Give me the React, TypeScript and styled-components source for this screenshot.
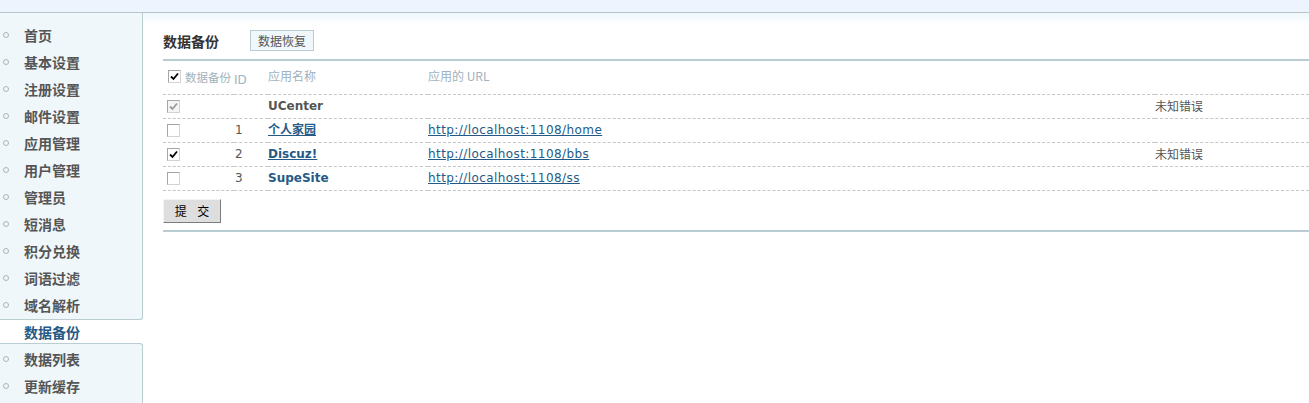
import styled, { createGlobalStyle } from 'styled-components'

const GlobalStyle = createGlobalStyle`
  html, body {
    margin: 0;
    padding: 0;
    background: #fff;
  }
  body {
    font-family: "DejaVu Sans", "Noto Sans CJK SC", sans-serif;
    font-size: 12px;
    color: #555;
  }
`

const cjk = `"Noto Sans CJK SC", "DejaVu Sans", sans-serif`
const blue = '#255a86'
const line = '#b9cdd3'

const TopBar = styled.div`
  height: 12px;
  background: #edf4fd;
  border-bottom: 1px solid #b7c7c9;
`

const Body = styled.div`
  display: flex;
  height: calc(100vh - 13px);
`

const Sidebar = styled.nav`
  width: 143px;
  flex-shrink: 0;
  display: flex;
  flex-direction: column;
`

const Group = styled.ul<{ $first?: boolean }>`
  list-style: none;
  margin: 0;
  padding: ${p => (p.$first ? '8px 0 1px' : '1px 0 0')};
  background: #eff7fb;
  border-right: 1px solid ${line};
  ${p =>
    p.$first
      ? `border-bottom: 1px solid ${line}; border-bottom-right-radius: 3px;`
      : `border-top: 1px solid ${line}; border-top-right-radius: 3px; flex: 1;`}
`

const Item = styled.li`
  height: 27px;
  display: flex;
  align-items: center;
  font-family: ${cjk};
  font-size: 14px;
  font-weight: bold;
  color: #555;
  &::before {
    content: '';
    width: 4px;
    height: 4px;
    border: 1px solid #b3b3b3;
    border-radius: 50%;
    margin: 0 15px 0 3px;
  }
`

const ActiveItem = styled.div`
  height: 23px;
  display: flex;
  align-items: center;
  padding-left: 24px;
  font-family: ${cjk};
  font-size: 14px;
  font-weight: bold;
  color: ${blue};
  background: #fff;
`

const Main = styled.main`
  flex: 1;
  padding: 17px 0 0 20px;
  background: linear-gradient(#eff7fb, #fff 12px);
`

const TitleRow = styled.div`
  display: flex;
  align-items: center;
  height: 21px;
  padding-bottom: 8px;
  border-bottom: 2px solid ${line};
`

const Title = styled.h3`
  margin: 0 31px 0 0;
  font-family: ${cjk};
  font-size: 14px;
  font-weight: bold;
  color: #333;
`

const TabButton = styled.button`
  height: 21px;
  padding: 0 7px;
  font-family: ${cjk};
  font-size: 12px;
  color: #555;
  background: #eff7fa;
  border: 1px solid ${line};
`

const Table = styled.table`
  width: 100%;
  border-collapse: collapse;
  table-layout: fixed;
  line-height: 16px;
`

const HeadRow = styled.tr`
  height: 33px;
`

const Row = styled.tr`
  height: 24px;
`

const HeadCell = styled.th<{ $low?: boolean; $pad?: number }>`
  padding: ${p => (p.$low ? '5px 0 0' : '0 0 2px')};
  padding-left: ${p => p.$pad ?? 0}px;
  text-align: left;
  font-weight: normal;
  font-family: ${p => (p.$low ? '"DejaVu Sans", sans-serif' : cjk)};
  font-size: 12px;
  color: #9fb2bd;
  border-bottom: 1px dashed #c6c6c6;
  white-space: nowrap;
  vertical-align: middle;
`

const Cell = styled.td<{ $pad?: number }>`
  padding: 0 0 0 ${p => p.$pad ?? 0}px;
  border-bottom: 1px dashed #c6c6c6;
  white-space: nowrap;
  vertical-align: middle;
`

const CheckWrap = styled.span`
  display: inline-flex;
  align-items: center;
  gap: 4px;
  font-size: 11.5px;
`

const Box = styled.span<{ $disabled?: boolean }>`
  display: inline-flex;
  align-items: center;
  justify-content: center;
  width: 11px;
  height: 11px;
  vertical-align: middle;
  background: ${p => (p.$disabled ? '#f4f4f4' : '#fff')};
  border: 1px solid #a6a6a6;
  border-right-color: #d4d4d4;
  border-bottom-color: #d4d4d4;
`

const Name = styled.span<{ $link?: boolean; $under?: boolean }>`
  font-weight: bold;
  font-family: "DejaVu Sans", "Noto Sans CJK SC", sans-serif;
  color: ${p => (p.$link ? blue : '#555')};
  text-decoration: ${p => (p.$under ? 'underline' : 'none')};
`

const Url = styled.a`
  color: ${blue};
  text-decoration: underline;
  font-size: 12px;
  letter-spacing: 0.42px;
`

const Status = styled.span`
  font-family: ${cjk};
  color: #555;
`

const Footer = styled.div`
  padding: 8px 0 7px;
  border-bottom: 2px solid ${line};
`

const Submit = styled.button`
  display: block;
  width: 58px;
  height: 24px;
  font-family: ${cjk};
  font-size: 12px;
  color: #000;
  background: #dedede;
  border: 1px solid;
  border-color: #f4f4f4 #7c7c7c #7c7c7c #f4f4f4;
  letter-spacing: 4px;
  padding: 0 0 0 4px;
`

const Check = ({ checked, disabled }: { checked?: boolean; disabled?: boolean }) => (
  <Box $disabled={disabled}>
    {checked && (
      <svg width="9" height="9" viewBox="0 0 9 9">
        <path d="M1 4.5 L3.5 7 L8 1.5" fill="none" stroke={disabled ? '#9a9a9a' : '#000'} strokeWidth="1.8" />
      </svg>
    )}
  </Box>
)

const menuTop = ['首页', '基本设置', '注册设置', '邮件设置', '应用管理', '用户管理', '管理员', '短消息', '积分兑换', '词语过滤', '域名解析']
const menuBottom = ['数据列表', '更新缓存']

const apps = [
  { id: '', name: 'UCenter', url: '', status: '未知错误', checked: true, disabled: true, link: false, under: false },
  { id: '1', name: '个人家园', url: 'http://localhost:1108/home', status: '', checked: false, link: true, under: true },
  { id: '2', name: 'Discuz!', url: 'http://localhost:1108/bbs', status: '未知错误', checked: true, link: true, under: true },
  { id: '3', name: 'SupeSite', url: 'http://localhost:1108/ss', status: '', checked: false, link: true, under: false },
]

export default function App() {
  return (
    <>
      <GlobalStyle />
      <TopBar />
      <Body>
        <Sidebar>
          <Group $first>
            {menuTop.map(m => <Item key={m}>{m}</Item>)}
          </Group>
          <ActiveItem>数据备份</ActiveItem>
          <Group>
            {menuBottom.map(m => <Item key={m}>{m}</Item>)}
          </Group>
        </Sidebar>
        <Main>
          <TitleRow>
            <Title>数据备份</Title>
            <TabButton>数据恢复</TabButton>
          </TitleRow>
          <Table>
            <colgroup>
              <col style={{ width: 71 }} />
              <col style={{ width: 34 }} />
              <col style={{ width: 160 }} />
              <col />
              <col style={{ width: 154 }} />
            </colgroup>
            <thead>
              <HeadRow>
                <HeadCell $pad={5}>
                  <CheckWrap><Check checked />数据备份</CheckWrap>
                </HeadCell>
                <HeadCell $low>ID</HeadCell>
                <HeadCell>应用名称</HeadCell>
                <HeadCell>应用的 URL</HeadCell>
                <HeadCell></HeadCell>
              </HeadRow>
            </thead>
            <tbody>
              {apps.map(a => (
                <Row key={a.name}>
                  <Cell $pad={4}><Check checked={a.checked} disabled={a.disabled} /></Cell>
                  <Cell $pad={1}>{a.id}</Cell>
                  <Cell><Name $link={a.link} $under={a.under}>{a.name}</Name></Cell>
                  <Cell>{a.url && <Url href="#">{a.url}</Url>}</Cell>
                  <Cell><Status>{a.status}</Status></Cell>
                </Row>
              ))}
            </tbody>
          </Table>
          <Footer>
            <Submit>提 交</Submit>
          </Footer>
        </Main>
      </Body>
    </>
  )
}
